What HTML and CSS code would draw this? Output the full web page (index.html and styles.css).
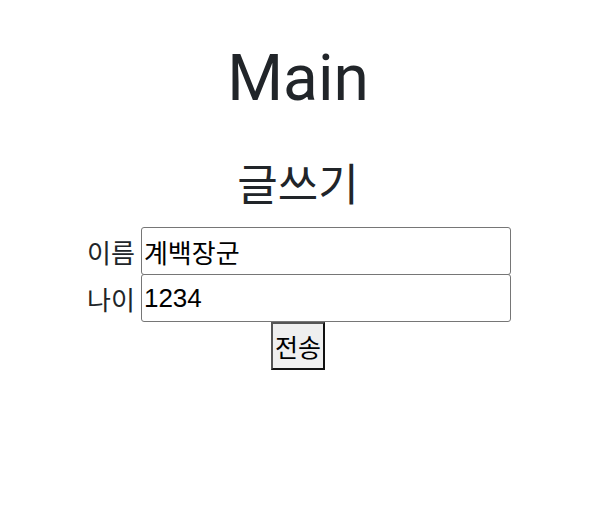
FILE: index.html
```html
<!DOCTYPE html>
<html lang="ko">
<head>
<meta charset="utf-8">
<link rel="stylesheet" href="styles.css">
</head>
<body>
<main class="page">
  <h1 class="title">Main</h1>
  <h2 class="subtitle">글쓰기</h2>
  <form class="form">
    <div class="row">
      <label class="label" for="name">이름</label>
      <input class="field" id="name" type="text" value="계백장군">
    </div>
    <div class="row">
      <label class="label" for="age">나이</label>
      <input class="field" id="age" type="text" value="1234">
    </div>
    <button class="submit" type="button">전송</button>
  </form>
</main>
</body>
</html>
```

FILE: styles.css
```css
html, body {
  margin: 0;
  padding: 0;
  background: #fff;
}
.page {
  width: 596px;
  display: flex;
  flex-direction: column;
  align-items: center;
  font-family: Roboto, "Noto Sans CJK KR", sans-serif;
  color: #212529;
}
.title {
  margin: 36px 0 0;
  font-family: Roboto, sans-serif;
  font-size: 64px;
  font-weight: 400;
  line-height: 86px;
}
.subtitle {
  margin: 32px 0 0;
  font-size: 44px;
  font-weight: 400;
  line-height: 56px;
  font-family: "Noto Sans CJK KR", sans-serif;
}
.form {
  margin-top: 17px;
  display: flex;
  flex-direction: column;
  align-items: center;
}
.row {
  display: flex;
  align-items: center;
  gap: 6px;
  margin-left: 2px;
}
.label {
  font-family: "Noto Sans CJK KR", sans-serif;
  font-size: 26px;
  color: #212529;
}
.field {
  box-sizing: border-box;
  width: 370px;
  height: 48px;
  margin: 0;
  padding: 0 2px;
  border: 1px solid #767676;
  border-radius: 3px;
  font-family: "Liberation Sans", "Noto Sans CJK KR", sans-serif;
  font-size: 26px;
  color: #000;
}
.row + .row .field {
  margin-top: -1px;
}
.submit {
  box-sizing: border-box;
  width: 54px;
  height: 48px;
  padding: 0;
  background: #efefef;
  border: 2px solid #111;
  border-color: #555 #111 #111 #555;
  font-family: "Noto Sans CJK KR", sans-serif;
  font-size: 25px;
  color: #000;
  white-space: nowrap;
  overflow: visible;
}
```
